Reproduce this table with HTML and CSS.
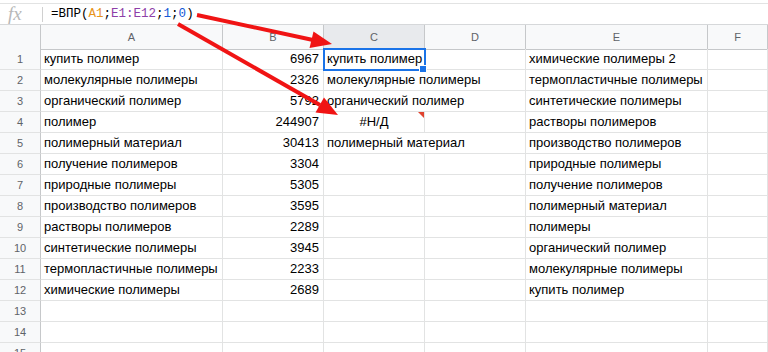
FILE: index.html
```html
<!DOCTYPE html>
<html lang="ru">
<head>
  <meta charset="UTF-8">
  <title>ВПР</title>
  <link rel="stylesheet" href="styles.css">
</head>
<body>
  <div class="sheet">
    <div class="formula-bar">
      <span class="fx">fx</span>
      <span class="sep"></span>
      <span class="formula">=ВПР(<span class="ref-a">A1</span>;<span class="ref-e">E1:E12</span>;<span class="num">1</span>;<span class="num">0</span>)</span>
    </div>

    <div class="row head">
      <div class="corner"></div>
      <div class="col-h">A</div>
      <div class="col-h">B</div>
      <div class="col-h active">C</div>
      <div class="col-h">D</div>
      <div class="col-h">E</div>
      <div class="col-h">F</div>
    </div>

    <div class="row"><div class="rh">1</div><div class="c">купить полимер</div><div class="c n">6967</div><div class="c sel">купить полимер</div><div class="c"></div><div class="c">химические полимеры 2</div><div class="c"></div></div>
    <div class="row"><div class="rh">2</div><div class="c">молекулярные полимеры</div><div class="c n">2326</div><div class="c span2">молекулярные полимеры</div><div class="c">термопластичные полимеры</div><div class="c"></div></div>
    <div class="row"><div class="rh">3</div><div class="c">органический полимер</div><div class="c n">5792</div><div class="c span2">органический полимер</div><div class="c">синтетические полимеры</div><div class="c"></div></div>
    <div class="row"><div class="rh">4</div><div class="c">полимер</div><div class="c n">244907</div><div class="c err">#Н/Д</div><div class="c"></div><div class="c">растворы полимеров</div><div class="c"></div></div>
    <div class="row"><div class="rh">5</div><div class="c">полимерный материал</div><div class="c n">30413</div><div class="c span2">полимерный материал</div><div class="c">производство полимеров</div><div class="c"></div></div>
    <div class="row"><div class="rh">6</div><div class="c">получение полимеров</div><div class="c n">3304</div><div class="c"></div><div class="c"></div><div class="c">природные полимеры</div><div class="c"></div></div>
    <div class="row"><div class="rh">7</div><div class="c">природные полимеры</div><div class="c n">5305</div><div class="c"></div><div class="c"></div><div class="c">получение полимеров</div><div class="c"></div></div>
    <div class="row"><div class="rh">8</div><div class="c">производство полимеров</div><div class="c n">3595</div><div class="c"></div><div class="c"></div><div class="c">полимерный материал</div><div class="c"></div></div>
    <div class="row"><div class="rh">9</div><div class="c">растворы полимеров</div><div class="c n">2289</div><div class="c"></div><div class="c"></div><div class="c">полимеры</div><div class="c"></div></div>
    <div class="row"><div class="rh">10</div><div class="c">синтетические полимеры</div><div class="c n">3945</div><div class="c"></div><div class="c"></div><div class="c">органический полимер</div><div class="c"></div></div>
    <div class="row"><div class="rh">11</div><div class="c">термопластичные полимеры</div><div class="c n">2233</div><div class="c"></div><div class="c"></div><div class="c">молекулярные полимеры</div><div class="c"></div></div>
    <div class="row"><div class="rh">12</div><div class="c">химические полимеры</div><div class="c n">2689</div><div class="c"></div><div class="c"></div><div class="c">купить полимер</div><div class="c"></div></div>
    <div class="row"><div class="rh">13</div><div class="c"></div><div class="c"></div><div class="c"></div><div class="c"></div><div class="c"></div><div class="c"></div></div>
    <div class="row"><div class="rh">14</div><div class="c"></div><div class="c"></div><div class="c"></div><div class="c"></div><div class="c"></div><div class="c"></div></div>
    <div class="row"><div class="rh">15</div><div class="c"></div><div class="c"></div><div class="c"></div><div class="c"></div><div class="c"></div><div class="c"></div></div>

    <!-- red arrows drawn over the sheet -->
    <svg class="arrows" width="768" height="352" viewBox="0 0 768 352">
      <line x1="197" y1="15" x2="313" y2="40" stroke="#f01414" stroke-width="4"/>
      <polygon points="332,44 313.5,31.5 309.5,48" fill="#f01414"/>
      <line x1="178" y1="24" x2="320" y2="105" stroke="#f01414" stroke-width="4"/>
      <polygon points="338,115 324,97.5 315.5,112.5" fill="#f01414"/>
    </svg>
  </div>
</body>
</html>
```

FILE: styles.css
```css
body {
  margin: 0;
  background: #fff;
  font-family: 'Liberation Sans', Arial, sans-serif;
  color: #000;
}
.sheet {
  position: relative;
  width: 768px;
  height: 352px;
  overflow: hidden;
}
.formula-bar {
  display: flex;
  align-items: center;
  height: 20px;
  margin-top: 3px;
  border-top: 1px solid #e2e3e3;
  border-bottom: 1px solid #d6d8da;
}
.fx {
  width: 42px;
  padding-left: 8px;
  box-sizing: border-box;
  font-family: 'Liberation Serif', serif;
  font-style: italic;
  font-size: 19px;
  color: #b8b8b8;
  line-height: 20px;
}
.sep {
  width: 1px;
  height: 15px;
  background: #d0d0d0;
}
.formula {
  margin-left: 8px;
  font-family: 'Liberation Mono', monospace;
  font-size: 12.5px;
  color: #000;
}
.ref-a { color: #e8941a; }
.ref-e { color: #8e3ea8; }
.num { color: #1558d6; }

.row {
  display: grid;
  grid-template-columns: 41px 182px 101px 101px 101px 182px 1fr;
  height: 21px;
}
.row.head {
  height: 24px;
}
.corner,
.col-h {
  background: #f8f9fa;
  border-right: 1px solid #c6c8ca;
  border-bottom: 1px solid #c6c8ca;
}
.col-h {
  font-size: 11px;
  color: #5f6368;
  text-align: center;
  line-height: 24px;
}
.col-h.active {
  background: #e8eaed;
}
.rh {
  background: #f8f9fa;
  border-right: 1px solid #c6c8ca;
  border-bottom: 1px solid #e2e3e3;
  font-size: 11px;
  color: #5f6368;
  text-align: center;
  line-height: 20px;
}
.c {
  position: relative;
  border-right: 1px solid #e2e3e3;
  border-bottom: 1px solid #e2e3e3;
  font-size: 13px;
  line-height: 20px;
  padding: 0 3px;
  white-space: nowrap;
}
.c.n {
  text-align: right;
  padding-right: 4px;
}
.c.span2 {
  grid-column: span 2;
}
.c.err {
  text-align: center;
}
.c.err::after {
  content: "";
  position: absolute;
  top: 0;
  right: 0;
  border-top: 6px solid #e0432f;
  border-left: 6px solid transparent;
}
.c.sel {
  outline: 2px solid #1a73e8;
  outline-offset: -1px;
  z-index: 1;
}
.c.sel::after {
  content: "";
  position: absolute;
  right: -3px;
  bottom: -4px;
  width: 6px;
  height: 6px;
  background: #1a73e8;
  border: 1px solid #fff;
}
.arrows {
  position: absolute;
  left: 0;
  top: 0;
  pointer-events: none;
  z-index: 2;
}
```
